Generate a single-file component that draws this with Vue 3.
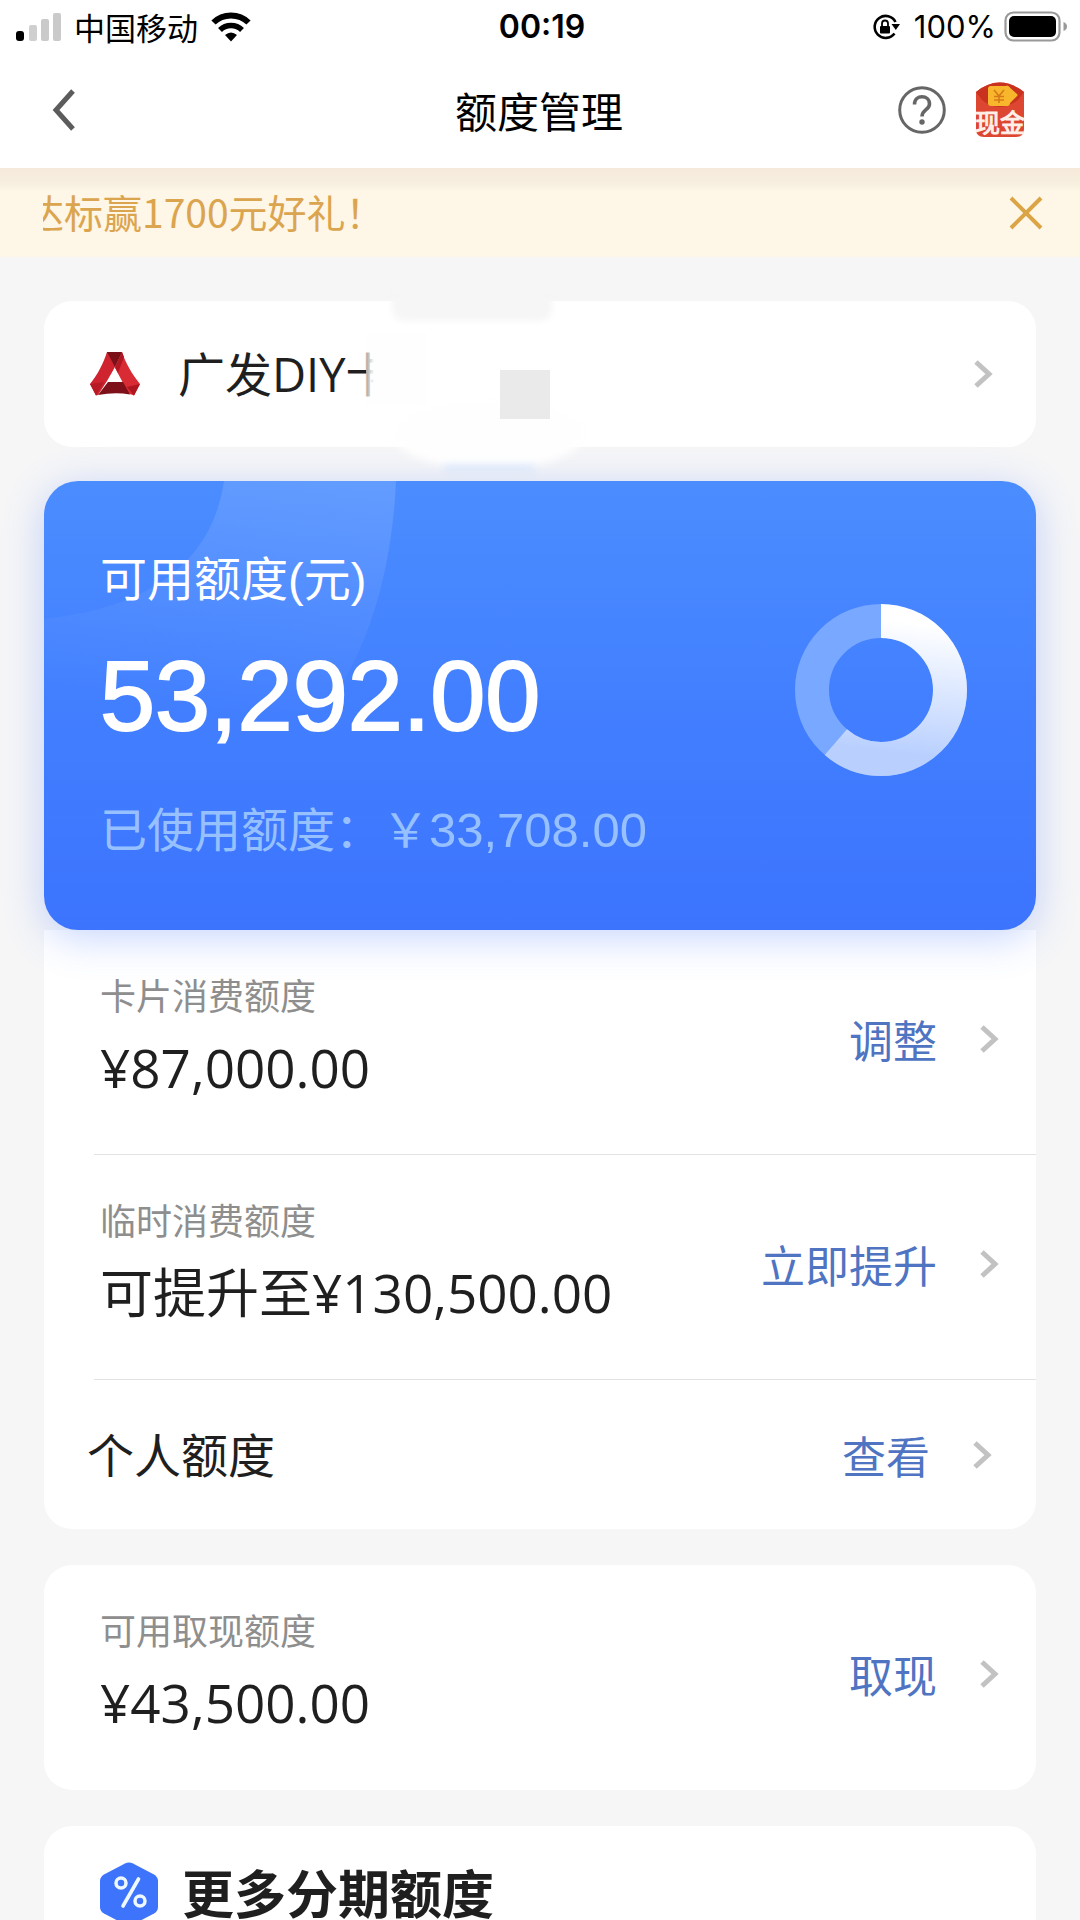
<script setup>
const available = 53292
const used = 33708

const radius = 69
const circumference = 2 * Math.PI * radius
const arc = (available / (available + used)) * circumference

const limits = [
  { label: '卡片消费额度', value: '¥87,000.00', action: '调整' },
  { label: '临时消费额度', value: '可提升至¥130,500.00', action: '立即提升' },
]
</script>

<template>
  <div class="screen">
    <div class="status">
      <div class="status-side">
        <svg class="signal" width="46" height="30" viewBox="0 0 46 30">
          <rect x="0" y="19" width="8" height="10" rx="3" fill="#000" />
          <rect x="13" y="13" width="8" height="16" rx="2" fill="#cfcfcf" />
          <rect x="25" y="7" width="8" height="22" rx="2" fill="#cacaca" />
          <rect x="37" y="1" width="8" height="28" rx="2" fill="#cacaca" />
        </svg>
        <span class="carrier">中国移动</span>
        <svg width="40" height="30" viewBox="0 0 40 30">
          <path d="M2.500 10.500 C12 1 28 1 37.500 10.500" fill="none" stroke="#000" stroke-width="6" />
          <path d="M9 18 C15 12 25 12 31 18" fill="none" stroke="#000" stroke-width="5.500" />
          <path d="M14 23 Q20 18 26 23 L20 29.500 Z" fill="#000" />
        </svg>
      </div>
      <span class="time">00:19</span>
      <div class="status-side status-right">
        <svg width="28" height="28" viewBox="0 0 28 28">
          <path d="M22.500 20.500 A11 11 0 1 1 23.500 9" fill="none" stroke="#000" stroke-width="2.600" />
          <path d="M19.500 11 H28 L23.800 17 Z" fill="#000" />
          <rect x="8" y="13" width="10" height="7.500" rx="1" fill="#000" />
          <path d="M10 13.500 V10.500 a3 3 0 0 1 6 0 V13.500" fill="none" stroke="#000" stroke-width="1.800" />
        </svg>
        <span class="percent">100%</span>
        <svg class="battery" width="64" height="32" viewBox="0 0 64 32">
          <rect x="1.500" y="1.500" width="54" height="28" rx="8" fill="none" stroke="#999" stroke-width="2.200" />
          <rect x="5" y="5" width="47" height="21" rx="5" fill="#000" />
          <path d="M59.500 11 Q63 12.500 63 15.500 T59.500 20 Z" fill="#999" />
        </svg>
      </div>
    </div>

    <header class="nav">
      <div class="nav-side">
        <button class="icon-button" type="button" aria-label="返回">
          <svg width="24" height="42" viewBox="0 0 24 42">
            <path d="M21 2 L4 21 L21 40" fill="none" stroke="#5c5c5c" stroke-width="5" />
          </svg>
        </button>
      </div>
      <h1 class="nav-title">额度管理</h1>
      <div class="nav-side nav-right">
        <button class="icon-button" type="button" aria-label="帮助">
          <svg width="48" height="48" viewBox="0 0 48 48">
            <circle cx="24" cy="24" r="22.300" fill="none" stroke="#666" stroke-width="3" />
            <path d="M16.500 18.500 C16.500 8 31.500 8.500 31.500 18 C31.500 24 24 23.500 24 30.500" fill="none" stroke="#666" stroke-width="3.600" />
            <circle cx="24" cy="36" r="2.700" fill="#666" />
          </svg>
        </button>
        <button class="icon-button" type="button" aria-label="领取现金">
          <svg width="52" height="56" viewBox="0 0 52 56">
            <path d="M2 10 Q25 -9 50 10 V47 Q50 55 42 55 H10 Q2 55 2 47 Z" fill="#dd4630" />
            <path d="M2 10 Q25 -9 50 10 L44 18 Q25 32 8 18 Z" fill="#c9321f" />
            <rect x="14" y="4" width="22" height="20" rx="3" fill="#f8b62c" />
            <path d="M33 5 L42 13 L33 22 Z" fill="#f8b62c" stroke="#f8b62c" stroke-width="3" stroke-linejoin="round" />
            <path d="M20 8 L25 14 L30 8 M25 14 V21 M20 14.500 H30 M20 18 H30" fill="none" stroke="#d67a16" stroke-width="1.600" />
            <text class="cash" x="26" y="50" text-anchor="middle">现金</text>
          </svg>
        </button>
      </div>
    </header>

    <main class="content">
      <div class="notice">
        <p class="notice-text"><span class="notice-run">达标赢1700元好礼！</span></p>
        <button class="icon-button" type="button" aria-label="关闭">
          <svg width="34" height="34" viewBox="0 0 34 34">
            <path d="M2 2 L32 32 M32 2 L2 32" fill="none" stroke="#dba445" stroke-width="4" />
          </svg>
        </button>
      </div>

      <div class="stack">
        <section class="card account">
          <svg class="logo" width="50" height="44" viewBox="0 0 50 44">
            <path d="M17 0 H32 L25 15 L17 29 L8 43 L6 43.500 L0 32 C8 22 13 12 17 0 Z" fill="#cf2430" />
            <path d="M32 0 C36 12 42 22 50 32 L44 43.500 L37 41 L32 29 L25 16 Z" fill="#d92b34" />
            <path d="M17 0 H32 L25 15 Z" fill="#7a1119" />
            <path d="M25 15 L32 0 L34 5 L28 21 Z" fill="#b01722" />
            <path d="M18 30 H33 L40 42.500 Q25 40 8 43 Z" fill="#7d1018" />
            <path d="M0 32 L14 30 L6 43.500 Z" fill="#b81a25" />
            <path d="M50 32 L37 35 L44 43.500 Z" fill="#ae1620" />
            <path d="M25 17 L19.500 29 H31 Z" fill="#fff" />
          </svg>
          <span class="account-name">广发DIY卡</span>
          <button class="icon-button" type="button" aria-label="选择卡片">
            <svg class="chevron" width="20" height="30" viewBox="0 0 20 30">
              <path d="M2 3 L15 15 L2 27" />
            </svg>
          </button>
          <span class="notch"></span>
          <span class="blob"></span>
          <span class="smear"></span>
          <span class="mosaic"></span>
        </section>

        <div class="limits">
          <section class="hero">
            <svg class="hero-art" width="360" height="230" viewBox="0 0 360 230">
              <defs>
                <linearGradient id="band" x1="0.700" y1="0" x2="0.450" y2="1">
                  <stop offset="0" stop-color="#fff" stop-opacity="0.130" />
                  <stop offset="1" stop-color="#fff" stop-opacity="0" />
                </linearGradient>
              </defs>
              <path d="M180 0 C170 70 120 125 0 138 V230 H280 C325 170 348 90 352 0 Z" fill="url(#band)" />
            </svg>
            <div class="hero-text">
              <p class="hero-label">可用额度(元)</p>
              <p class="hero-amount">53,292.00</p>
              <p class="hero-used">已使用额度：￥<span class="hero-used-number">33,708.00</span></p>
            </div>
            <svg class="donut" width="172" height="172" viewBox="0 0 172 172">
              <defs>
                <linearGradient id="ring" gradientUnits="userSpaceOnUse" x1="172" y1="100" x2="0" y2="80">
                  <stop offset="0.100" stop-color="#fff" />
                  <stop offset="0.850" stop-color="#b9d0ff" />
                </linearGradient>
              </defs>
              <circle cx="86" cy="86" :r="radius" fill="none" stroke="#78a8ff" stroke-width="34" />
              <circle
                cx="86" cy="86" :r="radius" fill="none" stroke="url(#ring)" stroke-width="34"
                :stroke-dasharray="`${arc} ${circumference}`" transform="rotate(-90 86 86)"
              />
            </svg>
          </section>

          <div class="card limit-list">
            <div v-for="item in limits" :key="item.label" class="row">
              <div class="row-text">
                <p class="row-label">{{ item.label }}</p>
                <p class="row-value">{{ item.value }}</p>
              </div>
              <button class="action" type="button">
                {{ item.action }}
                <svg class="chevron" width="20" height="30" viewBox="0 0 20 30">
                  <path d="M2 3 L15 15 L2 27" />
                </svg>
              </button>
            </div>
            <div class="row row-single">
              <p class="row-name">个人额度</p>
              <button class="action" type="button">
                查看
                <svg class="chevron" width="20" height="30" viewBox="0 0 20 30">
                  <path d="M2 3 L15 15 L2 27" />
                </svg>
              </button>
            </div>
          </div>
        </div>

        <section class="card">
          <div class="row">
            <div class="row-text">
              <p class="row-label">可用取现额度</p>
              <p class="row-value">¥43,500.00</p>
            </div>
            <button class="action" type="button">
              取现
              <svg class="chevron" width="20" height="30" viewBox="0 0 20 30">
                <path d="M2 3 L15 15 L2 27" />
              </svg>
            </button>
          </div>
        </section>

        <section class="card more">
          <svg width="58" height="64" viewBox="0 0 58 64">
            <path d="M25 1.500 Q29 -0.500 33 1.500 L54 12.500 Q58 15 58 19 V45 Q58 49 54 51.500 L33 62.500 Q29 64.500 25 62.500 L4 51.500 Q0 49 0 45 V19 Q0 15 4 12.500 Z" fill="#3d74fb" />
            <circle cx="21" cy="21" r="5" fill="none" stroke="#eef8ff" stroke-width="3.500" />
            <circle cx="40" cy="39" r="5" fill="none" stroke="#eef8ff" stroke-width="3.500" />
            <path d="M38.500 17 L23 44" fill="none" stroke="#eef8ff" stroke-width="3.600" stroke-linecap="round" />
          </svg>
          <h2 class="more-title">更多分期额度</h2>
        </section>
      </div>
    </main>
  </div>
</template>

<style>
body {
  margin: 0;
  background: #f6f6f7;
}
</style>

<style scoped>
.screen {
  display: flex;
  flex-direction: column;
  height: 100vh;
  overflow: hidden;
  background: #f6f6f7;
  color: #1f1f1f;
  font-family: "Open Sans", "Noto Sans CJK SC", sans-serif;
}

p,
h1,
h2 {
  margin: 0;
  font-weight: 400;
}

svg {
  display: block;
  flex: none;
}

.icon-button,
.action {
  padding: 0;
  border: 0;
  background: none;
  cursor: pointer;
}

.status {
  display: flex;
  flex: none;
  align-items: center;
  height: 54px;
  padding: 0 12px 0 16px;
  background: #fff;
  color: #000;
}

.status-side,
.nav-side {
  display: flex;
  flex: 1;
  align-items: center;
}

.status-right,
.nav-right {
  justify-content: flex-end;
}

.carrier {
  margin: 0 13px 0 12px;
  font-family: "Noto Sans CJK SC", sans-serif;
  font-size: 31px;
  line-height: 40px;
}

.time {
  font-family: Inter, sans-serif;
  font-size: 32px;
  font-weight: 600;
  line-height: 40px;
}

.percent {
  margin: 0 8px 0 14px;
  font-family: Inter, sans-serif;
  font-size: 31px;
  line-height: 40px;
}

.nav {
  display: flex;
  flex: none;
  align-items: center;
  height: 112px;
  padding: 0 54px 2px 52px;
  background: #fff;
}

.nav-title {
  color: #000;
  font-family: "Noto Sans CJK SC", sans-serif;
  font-size: 42px;
  line-height: 56px;
}

.nav-right {
  gap: 28px;
}

.cash {
  fill: #fff0e8;
  font-family: "Noto Sans CJK SC", sans-serif;
  font-size: 25px;
  font-weight: 400;
  stroke: #fff0e8;
  stroke-width: 1px;
}

.content {
  flex: 1;
  overflow: hidden auto;
  scrollbar-width: none;
}

.notice {
  display: flex;
  align-items: center;
  height: 89px;
  padding: 0 37px 0 43px;
  background: linear-gradient(#f6e9dc, #f7efdf 16px, #fef6e6 24px);
}

.notice-text {
  flex: 1;
  padding-bottom: 4px;
  overflow: hidden;
  color: #dba550;
  font-family: "Noto Sans CJK SC", sans-serif;
  font-size: 39px;
  line-height: 56px;
  white-space: nowrap;
}

.notice-run {
  margin-left: -18px;
}

.stack {
  display: flex;
  flex-direction: column;
  gap: 36px;
  padding: 44px 44px 36px;
}

.card {
  border-radius: 28px;
  background: #fff;
}

.account {
  position: relative;
  display: flex;
  align-items: center;
  height: 146px;
  margin-bottom: -2px;
  padding: 0 42px 0 46px;
}

.account-name {
  flex: 1;
  margin-left: 38px;
  font-size: 47px;
  line-height: 64px;
}

.notch,
.blob,
.smear,
.mosaic {
  position: absolute;
}

.notch {
  top: -4px;
  left: 348px;
  width: 160px;
  height: 24px;
  border-radius: 0 0 12px 12px;
  background: #f6f6f6;
  filter: blur(3px);
}

.blob {
  z-index: 1;
  top: 100px;
  left: 350px;
  width: 190px;
  height: 68px;
  border-radius: 50%;
  background: #fefefe;
  filter: blur(4px);
}

.blob::after {
  position: absolute;
  right: 50px;
  bottom: 0;
  left: 50px;
  height: 3px;
  border-radius: 2px;
  background: #b4d0fb;
  content: "";
}

.smear {
  top: 32px;
  left: 322px;
  width: 60px;
  height: 72px;
  background: linear-gradient(90deg, rgba(254, 254, 254, 0.6), #fefefe 8px);
}

.mosaic {
  z-index: 2;
  top: 69px;
  left: 456px;
  width: 50px;
  height: 49px;
  background: #eaeaeb;
}

.hero {
  position: relative;
  display: flex;
  align-items: center;
  justify-content: space-between;
  height: 449px;
  padding: 0 69px 0 56px;
  border-radius: 34px;
  background: linear-gradient(#4b8dff, #427fff 50%, #3c74fe);
  box-shadow: 0 8px 40px rgba(70, 120, 255, 0.3);
  color: #fff;
}

.hero-art {
  position: absolute;
  top: 0;
  left: 0;
}

.hero-text {
  position: relative;
}

.hero-label,
.hero-used {
  font-family: "Liberation Sans", "Noto Sans CJK SC", sans-serif;
  font-size: 47px;
  line-height: 64px;
}

.hero-amount {
  margin: 34px 0 52px;
  font-family: "Liberation Sans", sans-serif;
  font-size: 99px;
  line-height: 100px;
  -webkit-text-stroke: 2px #fff;
}

.hero-used {
  color: #97c0ff;
}

.hero-used-number {
  font-size: 49px;
}

.donut {
  position: relative;
  margin-top: -32px;
}

.limit-list {
  border-radius: 0 0 28px 28px;
}

.row {
  position: relative;
  display: flex;
  align-items: center;
  justify-content: space-between;
  height: 225px;
  padding: 0 36px 8px 56px;
  box-sizing: border-box;
}

.limit-list .row + .row::before {
  position: absolute;
  top: -1px;
  right: 0;
  left: 50px;
  height: 1px;
  background: #e2e2e4;
  content: "";
}

.row-label {
  color: #8e8e8e;
  font-size: 36px;
  line-height: 48px;
}

.row-value {
  margin-top: 11px;
  font-size: 53px;
  line-height: 72px;
}

.row-single {
  height: 149px;
  padding: 0 43px 0 43px;
}

.row-name {
  font-size: 47px;
  line-height: 64px;
}

.action {
  display: flex;
  align-items: center;
  gap: 43px;
  color: #4f74c2;
  font-family: "Noto Sans CJK SC", sans-serif;
  font-size: 44px;
  line-height: 60px;
}

.chevron path {
  fill: none;
  stroke: #c2c2c2;
  stroke-width: 5;
}

.more {
  display: flex;
  align-items: flex-start;
  gap: 24px;
  padding: 36px 56px 40px;
}

.more-title {
  font-family: "Noto Sans CJK SC", sans-serif;
  font-size: 52px;
  font-weight: 700;
  line-height: 60px;
}
</style>
